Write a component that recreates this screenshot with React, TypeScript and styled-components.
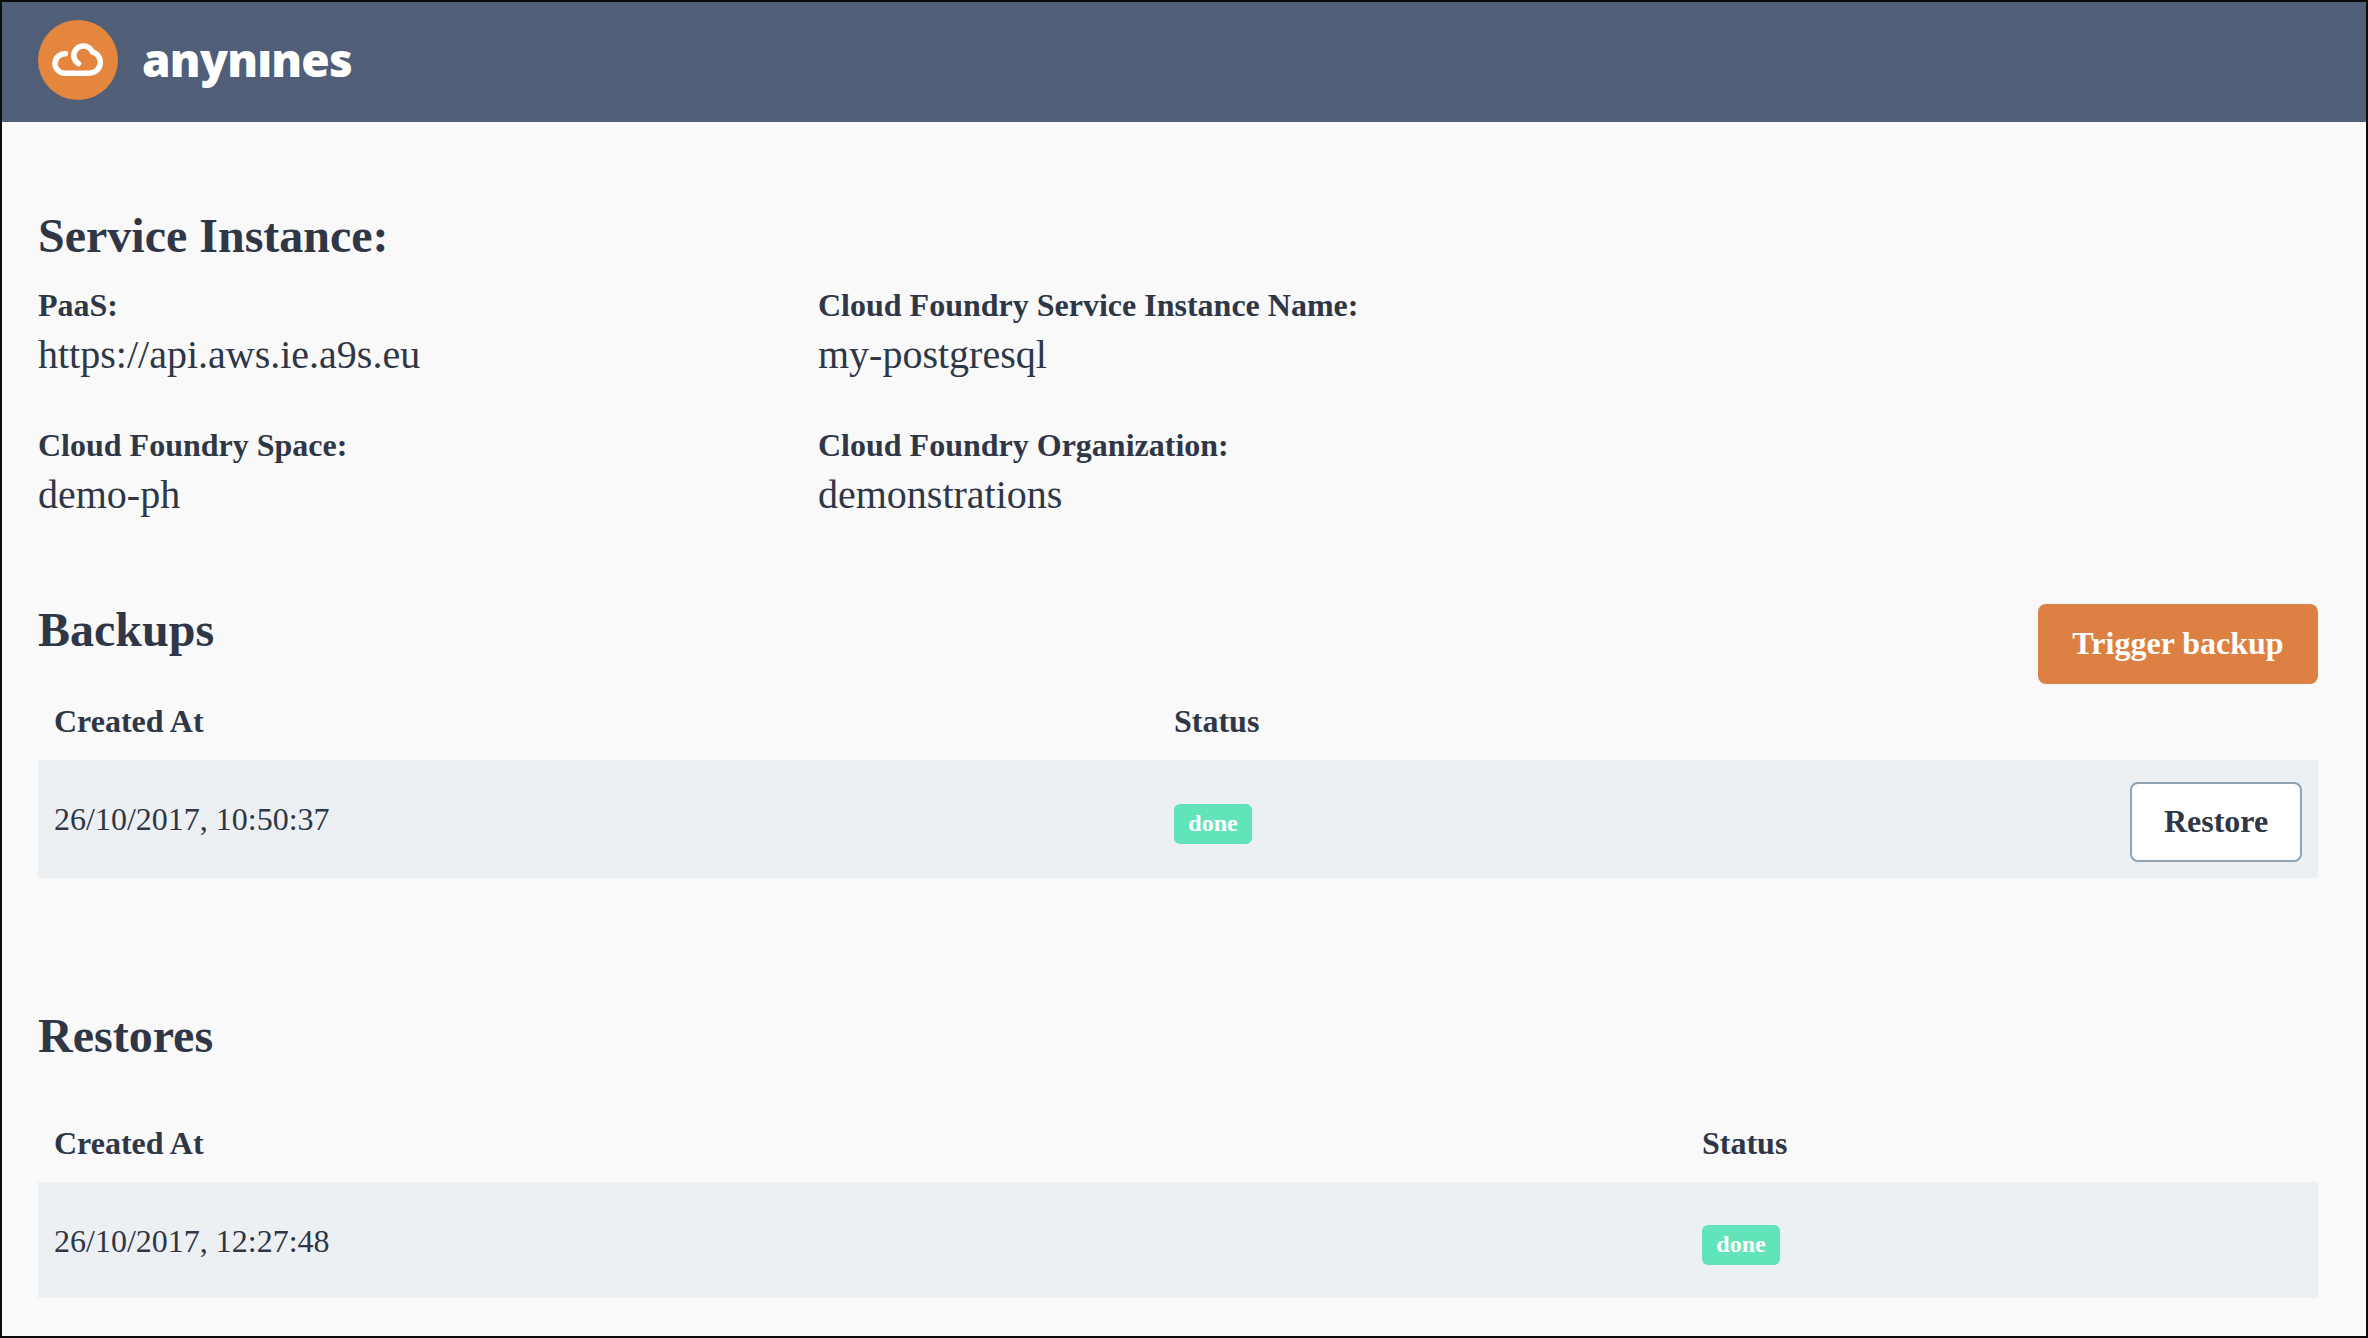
import React from "react";
import styled, { createGlobalStyle } from "styled-components";

const Global = createGlobalStyle`
  html, body { margin: 0; padding: 0; background: #000; }
  * { box-sizing: border-box; }
`;

const Frame = styled.div`
  width: 2368px;
  height: 1338px;
  padding: 2px;
  background: #0b0b0b;
  overflow: hidden;
  font-family: "Liberation Serif", "Times New Roman", serif;
  color: #2f3747;
`;

const Page = styled.div`
  height: 100%;
  background: #f9f9f9;
  display: flex;
  flex-direction: column;
`;

const Header = styled.header`
  height: 120px;
  flex: none;
  background: #505e78;
  display: flex;
  align-items: center;
  padding: 0 0 4px 36px;
  gap: 24px;
`;

const Wordmark = styled.span`
  font-family: "Open Sans", sans-serif;
  font-weight: 800;
  font-size: 46px;
  letter-spacing: -0.8px;
  color: #fff;
  line-height: 1;
  padding-bottom: 2px;
`;

const Main = styled.main`
  padding: 0 48px 0 36px;
  display: flex;
  flex-direction: column;
`;

const SectionRow = styled.div<{ $top: number }>`
  margin-top: ${(p) => p.$top}px;
  display: flex;
  align-items: flex-start;
  justify-content: space-between;
`;

const Title = styled.h2`
  margin: 0;
  font-size: 48px;
  line-height: 52px;
  font-weight: 700;
`;

const Facts = styled.div`
  display: grid;
  grid-template-columns: 780px 1fr;
  row-gap: 47px;
  margin-top: 24px;
`;

const Fact = styled.div`
  display: flex;
  flex-direction: column;
`;

const FactLabel = styled.span`
  font-size: 32px;
  line-height: 38px;
  font-weight: 700;
`;

const FactValue = styled.span`
  font-size: 40px;
  line-height: 48px;
  margin-top: 7px;
`;

const PrimaryButton = styled.button`
  width: 280px;
  height: 80px;
  border: 0;
  border-radius: 8px;
  background: #dd8043;
  color: #fff;
  font: 700 32px "Liberation Serif", "Times New Roman", serif;
  padding: 0 0 2px;
`;

const TableHead = styled.div<{ $cols: string; $top: number }>`
  display: grid;
  grid-template-columns: ${(p) => p.$cols};
  margin: ${(p) => p.$top}px 0 14px;
  height: 50px;
  align-items: center;
  padding: 0 16px;
  font-size: 32px;
  font-weight: 700;
`;

const TableRow = styled.div<{ $cols: string; $height: number }>`
  display: grid;
  grid-template-columns: ${(p) => p.$cols};
  height: ${(p) => p.$height}px;
  align-items: center;
  padding: 0 16px;
  background: #edf0f3;
  font-size: 32px;
`;

const DateText = styled.span<{ $nudge: number }>`
  padding-top: ${(p) => p.$nudge}px;
`;

const RowEnd = styled.div`
  display: flex;
  justify-content: space-between;
  align-items: center;
`;

const Badge = styled.span`
  display: inline-flex;
  width: 78px;
  height: 40px;
  margin-top: 10px;
  padding-bottom: 2px;
  align-items: center;
  justify-content: center;
  border-radius: 6px;
  background: #62e4bb;
  color: #fff;
  font-size: 24px;
  font-weight: 700;
`;

const GhostButton = styled.button`
  width: 172px;
  height: 80px;
  margin-top: 6px;
  border: 2px solid #8fa3b3;
  border-radius: 8px;
  background: #fff;
  color: #2f3747;
  font: 700 32px "Liberation Serif", "Times New Roman", serif;
  padding: 0 0 2px;
`;

const Logo = () => (
  <svg width="80" height="80" viewBox="0 0 80 80" aria-hidden="true">
    <circle cx="40" cy="40" r="40" fill="#e5863f" />
    <path
      d="M27.5 33.8A9.7 9.7 0 0 0 26 53.2H51C58 53.2 62.3 48 62.3 42.5C62.3 36.5 58 33 54.5 32C52.5 28 49 26 45.5 26C39.5 26 35.5 31 35.8 36C36 39.5 38 42 40.5 43.5"
      fill="none"
      stroke="#fff"
      strokeWidth="5.5"
      strokeLinecap="round"
      strokeLinejoin="round"
    />
  </svg>
);

const BACKUP_COLS = "1120px 1fr";
const RESTORE_COLS = "1648px 1fr";

export default function App() {
  return (
    <Frame>
      <Global />
      <Page>
        <Header>
          <Logo />
          <Wordmark>anynınes</Wordmark>
        </Header>
        <Main>
          <SectionRow $top={88}>
            <Title>Service Instance:</Title>
          </SectionRow>
          <Facts>
            <Fact>
              <FactLabel>PaaS:</FactLabel>
              <FactValue>https://api.aws.ie.a9s.eu</FactValue>
            </Fact>
            <Fact>
              <FactLabel>Cloud Foundry Service Instance Name:</FactLabel>
              <FactValue>my-postgresql</FactValue>
            </Fact>
            <Fact>
              <FactLabel>Cloud Foundry Space:</FactLabel>
              <FactValue>demo-ph</FactValue>
            </Fact>
            <Fact>
              <FactLabel>Cloud Foundry Organization:</FactLabel>
              <FactValue>demonstrations</FactValue>
            </Fact>
          </Facts>
          <SectionRow $top={85}>
            <Title>Backups</Title>
            <PrimaryButton>Trigger backup</PrimaryButton>
          </SectionRow>
          <TableHead $cols={BACKUP_COLS} $top={12}>
            <span>Created At</span>
            <span>Status</span>
          </TableHead>
          <TableRow $cols={BACKUP_COLS} $height={118}>
            <DateText $nudge={0}>26/10/2017, 10:50:37</DateText>
            <RowEnd>
              <Badge>done</Badge>
              <GhostButton>Restore</GhostButton>
            </RowEnd>
          </TableRow>
          <SectionRow $top={132}>
            <Title>Restores</Title>
          </SectionRow>
          <TableHead $cols={RESTORE_COLS} $top={56}>
            <span>Created At</span>
            <span>Status</span>
          </TableHead>
          <TableRow $cols={RESTORE_COLS} $height={116}>
            <DateText $nudge={2}>26/10/2017, 12:27:48</DateText>
            <RowEnd>
              <Badge>done</Badge>
            </RowEnd>
          </TableRow>
        </Main>
      </Page>
    </Frame>
  );
}
